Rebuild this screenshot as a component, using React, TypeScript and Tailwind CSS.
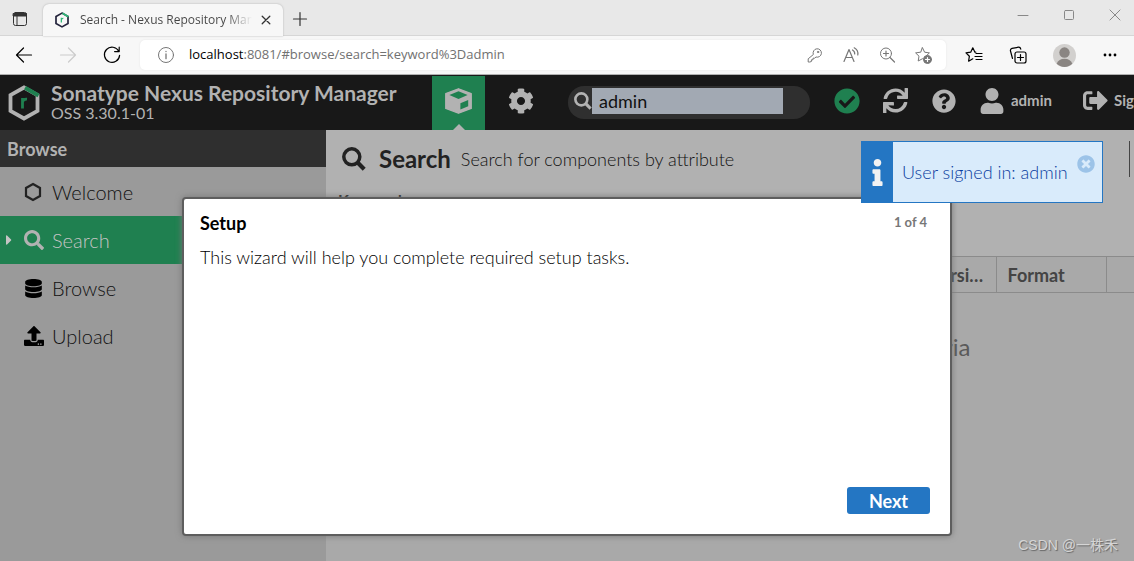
import type { ReactNode } from "react";
import {
  FaCog,
  FaSearch,
  FaCheckCircle,
  FaSync,
  FaQuestionCircle,
  FaUser,
  FaSignOutAlt,
  FaDatabase,
  FaUpload,
  FaInfo,
  FaTimesCircle,
  FaCaretRight,
} from "react-icons/fa";

function HexLogo({ className, ring, accent }: { className: string; ring: string; accent: string }) {
  return (
    <svg viewBox="0 0 32 36" className={className} aria-hidden="true">
      <path d="M16 2.5 29.5 10V26L16 33.5 2.5 26V10Z" fill="none" stroke={ring} strokeWidth="3.8" />
      <path d="M17 2.8 30.5 10.6" stroke={accent} strokeWidth="4" />
      <path d="M14.5 23.5V13M14.5 17Q15.2 13.9 19 14.2" fill="none" stroke={accent} strokeWidth="2.8" />
    </svg>
  );
}

function LineIcon({ className, children }: { className: string; children: ReactNode }) {
  return (
    <svg
      viewBox="0 0 18 18"
      className={className}
      fill="none"
      stroke="currentColor"
      strokeLinecap="round"
      strokeLinejoin="round"
      aria-hidden="true"
    >
      {children}
    </svg>
  );
}

function Magnifier({ className }: { className: string }) {
  return (
    <svg viewBox="0 0 24 24" className={className} fill="none" stroke="currentColor" aria-hidden="true">
      <circle cx="9.8" cy="9.8" r="8" strokeWidth="3.5" />
      <path d="M15.6 15.6 22.2 22.2" strokeWidth="4.2" />
    </svg>
  );
}

const star = "M8.5 1.8 10.6 6.2 15.4 6.9 11.9 10.2 12.8 15 8.5 12.7 4.2 15 5 10.2 1.6 6.9 6.4 6.2Z";

function BrowserChrome() {
  return (
    <header className="shrink-0 border-b border-[#b0b0b0] bg-[#f7f7f7] font-['Open_Sans',sans-serif]">
      <div className="flex h-9 items-end border-b border-[#d6d6d6] bg-[#e8e8e8]">
        <button aria-label="Tab actions" className="flex h-8 w-[43px] items-center justify-center pr-1 text-[#333]">
          <LineIcon className="size-[18px]">
            <rect x="2.5" y="2.5" width="13" height="13" rx="2" />
            <path d="M2.5 3.5H15.5V6H2.5Z" fill="currentColor" />
            <path d="M6 6V15" />
          </LineIcon>
        </button>
        <div className="-mb-px flex h-8 w-60 items-center rounded-t-md bg-[#f7f7f7] pl-[11px] shadow-[0_0_2px_#aaa]">
          <HexLogo className="size-4" ring="#23233b" accent="#2fb777" />
          <span className="ml-2.5 w-[172px] overflow-hidden bg-linear-to-r from-[#444] from-85% to-transparent bg-clip-text text-xs whitespace-nowrap text-transparent">
            Search - Nexus Repository Manager
          </span>
          <button aria-label="Close tab" className="ml-[5px] text-[#333]">
            <LineIcon className="size-[18px]">
              <path d="M5.2 5.2 12.8 12.8M12.8 5.2 5.2 12.8" strokeWidth="1.3" />
            </LineIcon>
          </button>
        </div>
        <button aria-label="New tab" className="ml-2 flex h-8 items-center text-[#333]">
          <LineIcon className="size-[18px]">
            <path d="M9 2.5V15.5M2.5 9H15.5" strokeWidth="1.2" />
          </LineIcon>
        </button>
        <div className="ml-auto flex h-8 items-start gap-7 pt-1 pr-2.5 text-[#888]">
          <button aria-label="Minimize">
            <LineIcon className="size-[18px]"><path d="M4 8.5H14" /></LineIcon>
          </button>
          <button aria-label="Maximize">
            <LineIcon className="size-[18px]"><rect x="4.5" y="3.5" width="9" height="9" rx="1" /></LineIcon>
          </button>
          <button aria-label="Close window">
            <LineIcon className="size-[18px]"><path d="M4 3 14 13M14 3 4 13" /></LineIcon>
          </button>
        </div>
      </div>
      <div className="flex h-[38px] items-center">
        <nav className="flex w-[140px] shrink-0 items-center gap-[26px] pl-[15px] text-black">
          <button aria-label="Back">
            <LineIcon className="size-[18px]"><path d="M16.5 9H1.5M8.5 2 1.5 9 8.5 16" strokeWidth="1.2" /></LineIcon>
          </button>
          <button aria-label="Forward" className="text-[#ccc]">
            <LineIcon className="size-[18px]"><path d="M1.5 9H16.5M9.5 2 16.5 9 9.5 16" strokeWidth="1.2" /></LineIcon>
          </button>
          <button aria-label="Refresh">
            <LineIcon className="size-[18px]">
              <path d="M15.8 5.3A7.6 7.6 0 1 0 16.6 9.4M16.2 1.2V5.6H11.6" strokeWidth="1.2" />
            </LineIcon>
          </button>
        </nav>
        <div className="flex h-[30px] flex-1 items-center rounded-[5px] bg-white pr-3.5 pl-[17px] text-[#777] shadow-[0_0_2px_#e2e2e2]">
          <LineIcon className="size-[18px] shrink-0">
            <circle cx="9" cy="9" r="7.5" />
            <path d="M9 8V12.7M9 5.4V5.6" strokeWidth="1.3" />
          </LineIcon>
          <p className="ml-3.5 flex-1 text-[13px] text-[#717171]">
            <span className="text-black">localhost</span>:8081/#browse/search=keyword%3Dadmin
          </p>
          <div className="flex items-center gap-[18px]">
            <button aria-label="Passwords">
              <LineIcon className="size-[18px]">
                <path d="M7.2 8.2A4.2 4.2 0 1 1 10 11L8.6 12.2H7V13.8H5.4V15.5L3.8 16H2.2V13.2Z" />
                <circle cx="12" cy="6" r=".7" />
              </LineIcon>
            </button>
            <button aria-label="Read aloud">
              <LineIcon className="size-[18px]">
                <path d="M2 15.5 7 3.5 12 15.5M3.8 11.5H10.2M10.5 4Q13 5.5 12.7 8M12.2 1.8Q16.6 4.3 15.8 9" strokeWidth="1.2" />
              </LineIcon>
            </button>
            <button aria-label="Zoom">
              <LineIcon className="size-[18px]">
                <circle cx="8" cy="7.5" r="5.5" />
                <path d="M12 11.5 16.5 16M8 5V10M5.5 7.5H10.5" strokeWidth="1.2" />
              </LineIcon>
            </button>
            <button aria-label="Add to favorites">
              <LineIcon className="size-[18px]">
                <path d={star} />
                <circle cx="13.5" cy="13.5" r="4" fill="currentColor" />
                <path d="M13.5 11.5V15.5M11.5 13.5H15.5" stroke="#fff" strokeWidth="1.2" />
              </LineIcon>
            </button>
          </div>
        </div>
        <div className="flex items-center pl-[19px] text-black">
          <button aria-label="Favorites">
            <LineIcon className="size-[18px]">
              <path d="M10.8 6.2 9.9 6.2 7.8 1.8 5.7 6.2 1 6.9 4.4 10.2 3.6 15.2 7.8 12.8M11 7.5H17M10 10.5H17M11 13.5H17" strokeWidth="1.2" />
            </LineIcon>
          </button>
          <button aria-label="Collections" className="ml-[26px]">
            <LineIcon className="size-[18px]">
              <rect x="6" y="6" width="11" height="11" rx="2" strokeWidth="1.2" />
              <path d="M11.5 8.5V14.5M8.5 11.5H14.5M3.5 12.5 1.5 5Q1 3 3 2.4L9.5 1.2Q11.3 1 11.8 3.2" strokeWidth="1.2" />
            </LineIcon>
          </button>
          <button aria-label="Profile" className="ml-[26px]">
            <svg viewBox="0 0 22 22" className="size-[23px]" aria-hidden="true">
              <circle cx="11" cy="11" r="11" fill="#d2d0ce" />
              <circle cx="11" cy="8.2" r="5" fill="#8a8582" />
              <path d="M3.5 19Q5.5 14.2 11 14.2T18.5 19Q15.5 22 11 22T3.5 19Z" fill="#8a8582" />
            </svg>
          </button>
          <button aria-label="Settings and more" className="mr-[15px] ml-[25px]">
            <svg viewBox="0 0 18 18" className="size-[18px]" aria-hidden="true">
              <circle cx="4" cy="9" r="1.4" />
              <circle cx="9" cy="9" r="1.4" />
              <circle cx="14" cy="9" r="1.4" />
            </svg>
          </button>
        </div>
      </div>
    </header>
  );
}

function AppHeader() {
  return (
    <header className="flex h-[55px] shrink-0 items-center overflow-hidden bg-[#181818] text-[#b2b2b2]">
      <div className="flex w-[432px] shrink-0 items-center pl-2">
        <HexLogo className="h-9 w-8" ring="#b2b2b2" accent="#1f8050" />
        <div className="ml-[11px] whitespace-nowrap">
          <h1 className="text-[21px] leading-5 font-bold">Sonatype Nexus Repository Manager</h1>
          <p className="text-base leading-5">OSS 3.30.1-01</p>
        </div>
      </div>
      <button aria-label="Browse" className="mt-px flex h-[54px] w-[53px] shrink-0 flex-col items-center justify-between bg-[#1f8050]">
        <svg viewBox="0 0 27 26" className="mt-3 h-[26px] w-[27px]" aria-hidden="true">
          <path
            d="M13.5 0.8 26.2 5.6V20.4L13.5 25.2 0.8 20.4V5.6Z"
            fill="#b2b2b2"
            stroke="#b2b2b2"
            strokeWidth="1.4"
            strokeLinejoin="round"
          />
          <path d="M13.5 3.2 22.6 6.9 13.5 10.9 4.4 6.9Z" fill="#1f8050" />
          <path d="M15.4 15.2 23.2 11.9V18.2L15.4 21.4Z" fill="#1f8050" />
        </svg>
        <svg viewBox="0 0 12 6" className="h-1.5 w-3" aria-hidden="true">
          <path d="M0 6 6 0 12 6Z" fill="#b2b2b2" />
        </svg>
      </button>
      <button aria-label="Administration" className="mb-1 ml-[23px] shrink-0">
        <FaCog className="size-[26px]" />
      </button>
      <label className="ml-[34px] flex h-[33px] w-[242px] shrink-0 items-center rounded-2xl bg-[#2f2f2f] pl-1.5">
        <Magnifier className="mb-1 size-[18px] shrink-0" />
        <span className="sr-only">Search components</span>
        <input
          type="search"
          defaultValue="admin"
          className="mb-1 h-[26px] w-[191px] bg-[#a2a9b3] px-[7px] text-lg leading-6 text-[#111] outline-none"
        />
      </label>
      <button aria-label="System status" className="mb-1 ml-6 shrink-0 text-[#1f8050]">
        <FaCheckCircle className="size-[26px]" />
      </button>
      <button aria-label="Refresh" className="mb-1 ml-[23px] shrink-0">
        <FaSync className="size-[25px]" />
      </button>
      <button aria-label="Help" className="mb-1 ml-6 shrink-0">
        <FaQuestionCircle className="size-6" />
      </button>
      <button className="mb-1 ml-[23px] flex shrink-0 items-center gap-1.5 text-[15px] font-bold">
        <FaUser className="size-[26px]" />
        admin
      </button>
      <button className="mb-1 ml-[31px] flex shrink-0 items-center gap-1.5 text-[15px] font-bold whitespace-nowrap">
        <FaSignOutAlt className="size-[25px]" />
        Sign out
      </button>
    </header>
  );
}

function NavItem({ label, icon, active = false }: { label: string; icon: ReactNode; active?: boolean }) {
  return (
    <li>
      <a
        href="#browse"
        aria-current={active ? "page" : undefined}
        className={
          active
            ? "flex h-12 items-center bg-[#1f8050] text-xl font-light text-[#c4c4c4]"
            : "flex h-12 items-center text-xl font-light text-[#111]"
        }
      >
        <span className="flex w-6 pl-px">{active && <FaCaretRight className="size-4" />}</span>
        <span className="flex w-7 items-center">{icon}</span>
        {label}
      </a>
    </li>
  );
}

function Sidebar() {
  return (
    <aside className="w-[326px] shrink-0 bg-[#9a9a9a]">
      <h2 className="flex h-[37px] items-center bg-[#2f2f2f] pl-[7px] text-lg font-bold text-[#b2b2b2]">Browse</h2>
      <ul className="pt-px">
        <NavItem
          label="Welcome"
          icon={
            <svg viewBox="0 0 18 20" className="h-5 w-[18px]" aria-hidden="true">
              <path d="M9 2 16 6V14L9 18 2 14V6Z" fill="none" stroke="#222" strokeWidth="2.2" />
            </svg>
          }
        />
        <NavItem label="Search" active icon={<FaSearch className="size-5 text-[#b2b2b2]" />} />
        <NavItem label="Browse" icon={<FaDatabase className="size-[19px] text-black" />} />
        <NavItem label="Upload" icon={<FaUpload className="size-5 text-black" />} />
      </ul>
    </aside>
  );
}

function SearchPanel() {
  return (
    <main className="flex min-w-0 flex-1 flex-col bg-[#b1b1b1] text-[#222]">
      <div className="flex h-[58px] items-center pr-1 pl-4">
        <Magnifier className="size-6" />
        <h2 className="ml-[13px] text-2xl font-bold">Search</h2>
        <p className="ml-2.5 text-lg font-light text-[#111]">Search for components by attribute</p>
        <span className="ml-auto h-9 border-l border-[#444]" />
      </div>
      <div className="h-[68px] pl-3 text-base leading-6 font-bold">Keyword</div>
      <table className="w-full table-fixed border-y border-[#8b8b8b] bg-[#a9a9a9] text-left text-lg text-[#444]">
        <thead>
          <tr className="h-9">
            <th className="border-r border-[#8b8b8b]" aria-label="Name" />
            <th className="w-44 border-r border-[#8b8b8b]" aria-label="Group" />
            <th className="w-[85px] truncate border-r border-[#8b8b8b] pr-2 pl-[18px]">Version</th>
            <th className="w-[110px] border-r border-[#8b8b8b] px-[11px]">Format</th>
            <th className="w-7" aria-label="Details" />
          </tr>
        </thead>
      </table>
      <div className="flex-1 bg-[#a9a9a9] pt-[38px] pr-4 text-center text-2xl text-[#5a5a5a]">
        No components match the current filter criteria
      </div>
    </main>
  );
}

function SetupDialog() {
  return (
    <section
      role="dialog"
      aria-labelledby="setup-title"
      className="absolute top-[122px] left-1/2 flex h-[339px] w-[770px] -translate-x-1/2 flex-col rounded border-2 border-[#5e5e5e] bg-white px-4 pt-3 pb-5 shadow-[0_0_6px_#777]"
    >
      <div className="flex items-center justify-between pr-[7px]">
        <h2 id="setup-title" className="text-lg leading-6 font-bold text-black">Setup</h2>
        <span className="text-[13px] font-bold text-[#777]">1 of 4</span>
      </div>
      <p className="mt-2.5 text-lg leading-6 font-light text-black">This wizard will help you complete required setup tasks.</p>
      <button className="mt-auto mr-1 h-[27px] w-[83px] self-end rounded-[3px] bg-[#2476c3] text-lg leading-6 font-bold text-white">
        Next
      </button>
    </section>
  );
}

function Toast() {
  return (
    <div role="status" className="absolute top-[66px] right-[31px] flex h-[62px] w-[242px] border border-[#2476c3] bg-[#d9ebfb]">
      <div className="flex w-[31px] items-center justify-center bg-[#2476c3] text-[#f2f2f2]">
        <FaInfo className="size-[27px]" />
      </div>
      <p className="flex flex-1 items-center pl-[9px] text-lg font-light whitespace-nowrap text-[#0a3da0]">User signed in: admin</p>
      <button aria-label="Dismiss" className="mt-[13px] mr-[7px] size-[18px] text-[#9cc3e8]">
        <FaTimesCircle className="size-[18px]" />
      </button>
    </div>
  );
}

export default function App() {
  return (
    <div className="flex h-screen flex-col overflow-hidden font-['Lato',sans-serif]">
      <BrowserChrome />
      <div className="relative flex min-h-0 flex-1 flex-col">
        <AppHeader />
        <div className="flex min-h-0 flex-1">
          <Sidebar />
          <SearchPanel />
        </div>
        <SetupDialog />
        <Toast />
        <span className="absolute right-4 bottom-1.5 font-['Liberation_Sans','Noto_Sans_CJK_SC',sans-serif] text-sm text-[#d5d5d5] [text-shadow:1px_1px_1px_#666]">
          CSDN @一株禾
        </span>
      </div>
    </div>
  );
}
